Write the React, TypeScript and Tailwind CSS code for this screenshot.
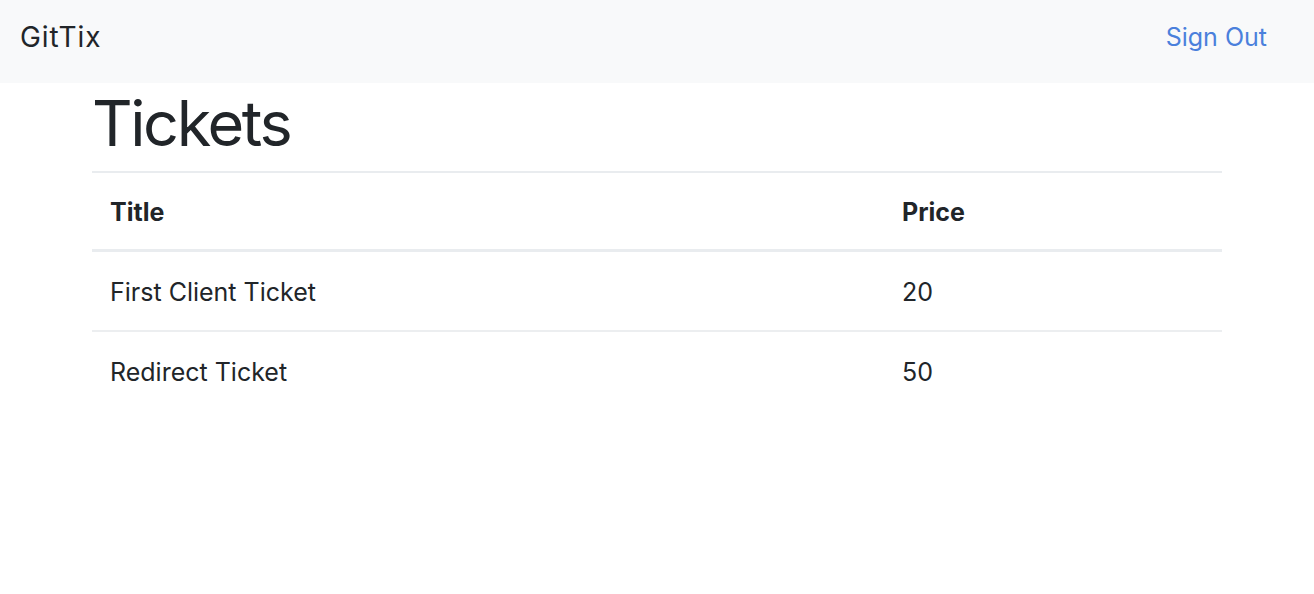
export default function App() {
  const rows = [
    { title: "First Client Ticket", price: "20" },
    { title: "Redirect Ticket", price: "50" },
  ];
  return (
    <div className="min-h-[594px] w-full bg-white text-[#212529]" style={{ fontFamily: "Inter, 'Liberation Sans', Arial, sans-serif" }}>
      <nav className="flex h-[83px] items-center justify-between bg-[#f8f9fa] pl-[20px] pr-[47px]">
        <a className="text-[28px] leading-none tracking-[0.9px] text-[#212529] -mt-[10px]">GitTix</a>
        <a className="text-[25px] leading-none text-[#4a80dc] -mt-[9px]">Sign Out</a>
      </nav>
      <div className="px-[92px]">
        <h1 className="text-[63px] leading-[1.2] tracking-[-2.4px] font-normal pt-[3px] pb-[9px]">Tickets</h1>
        <table className="w-[1130px] border-collapse text-[25px]">
          <thead>
            <tr>
              <th className="w-[792px] border-t-[2px] border-b-[3px] border-[#e9ecef] px-[18px] pt-[4px] h-[79px] text-left font-bold">Title</th>
              <th className="border-t-[2px] border-b-[3px] border-[#e9ecef] px-[18px] pt-[4px] h-[79px] text-left font-bold">Price</th>
            </tr>
          </thead>
          <tbody>
            {rows.map((r, i) => (
              <tr key={r.title}>
                <td className={`px-[18px] pt-[4px] h-[80px] ${i === 0 ? "border-b-[2px] border-[#eceef0]" : ""}`}>{r.title}</td>
                <td className={`px-[18px] pt-[4px] h-[80px] ${i === 0 ? "border-b-[2px] border-[#eceef0]" : ""}`}>{r.price}</td>
              </tr>
            ))}
          </tbody>
        </table>
      </div>
    </div>
  );
}
